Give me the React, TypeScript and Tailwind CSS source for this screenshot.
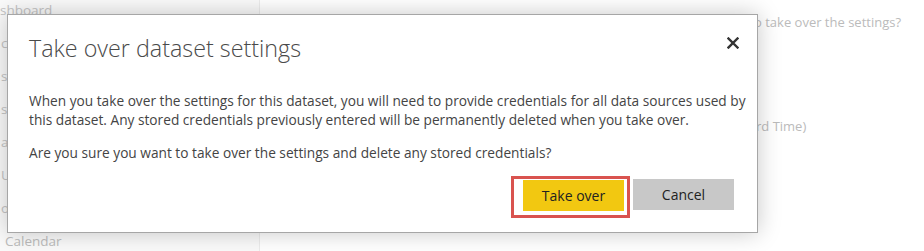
import * as React from "react"

const sideItems = ["shboard", "c", "sl", "sa", "as", "U", "oj"]

function CloseIcon() {
  return (
    <svg width="12" height="12" viewBox="0 0 12 12" fill="none">
      <path d="M1.5 1.5L10.5 10.5M10.5 1.5L1.5 10.5" stroke="#333" strokeWidth="2.4" strokeLinecap="square" />
    </svg>
  )
}

export default function App() {
  return (
    <div className="relative w-[924px] h-[251px] overflow-hidden bg-white font-['Open_Sans',sans-serif]">
      {/* page behind the dialog */}
      <div className="flex h-full">
        <div className="w-[260px] shrink-0 border-r border-[#ececec] bg-[#fafafa] flex flex-col mt-[-6px]">
          {sideItems.map((item, i) => (
            <div
              key={item}
              className={`h-[33px] shrink-0 flex items-center text-[13.5px] text-[#c4c4c4] whitespace-nowrap ${i === 0 ? "pl-0" : "pl-[1px]"}`}
            >
              {item}
            </div>
          ))}
          <div className="h-[33px] shrink-0 flex items-center pl-[5px] text-[13.5px] text-[#bdbdbd]">Calendar</div>
        </div>
        <div className="flex-1 flex flex-col pl-[497px] pt-[13px] text-[13px] text-[#bbbbbb] whitespace-nowrap">
          <div className="overflow-hidden">
            <div className="ml-[-3px]">o take over the settings?</div>
          </div>
          <div className="overflow-hidden mt-[84px]">
            <div className="ml-[-1px]">rd Time)</div>
          </div>
        </div>
      </div>

      {/* dialog */}
      <div className="absolute left-[7px] top-[14px] w-[751px] h-[219px] bg-white border border-[#a6a6a6] shadow-[0_0_22px_rgba(0,0,0,0.22)] flex flex-col">
        <div className="flex items-start justify-between pl-[21px] pr-[14px] pt-[17px]">
          <h1 className="text-[23.3px] font-light text-[#4a4a4a] leading-[32px]">Take over dataset settings</h1>
          <button className="mt-[1px] p-[4px]">
            <CloseIcon />
          </button>
        </div>
        <div className="pl-[21px] pr-[12px] pt-[27px] text-[13.7px] leading-[19px] text-[#444] whitespace-nowrap">
          <p>
            When you take over the settings for this dataset, you will need to provide credentials for all data sources used by
            <br />
            this dataset. Any stored credentials previously entered will be permanently deleted when you take over.
          </p>
          <p className="mt-[14px]">Are you sure you want to take over the settings and delete any stored credentials?</p>
        </div>
        <div className="flex justify-end items-start gap-[3px] pr-[23px] mt-[14px]">
          <div className="border-[3px] border-[#d9534f] pt-[1px] pb-[4px] pl-[9px] pr-[3px]">
            <button className="w-[101px] h-[31px] bg-[#f2c811] text-[14px] font-medium text-[#222]">Take over</button>
          </div>
          <button className="mt-[3px] w-[101px] h-[31px] bg-[#c8c8c8] text-[14px] font-medium text-[#222]">Cancel</button>
        </div>
      </div>
    </div>
  )
}
